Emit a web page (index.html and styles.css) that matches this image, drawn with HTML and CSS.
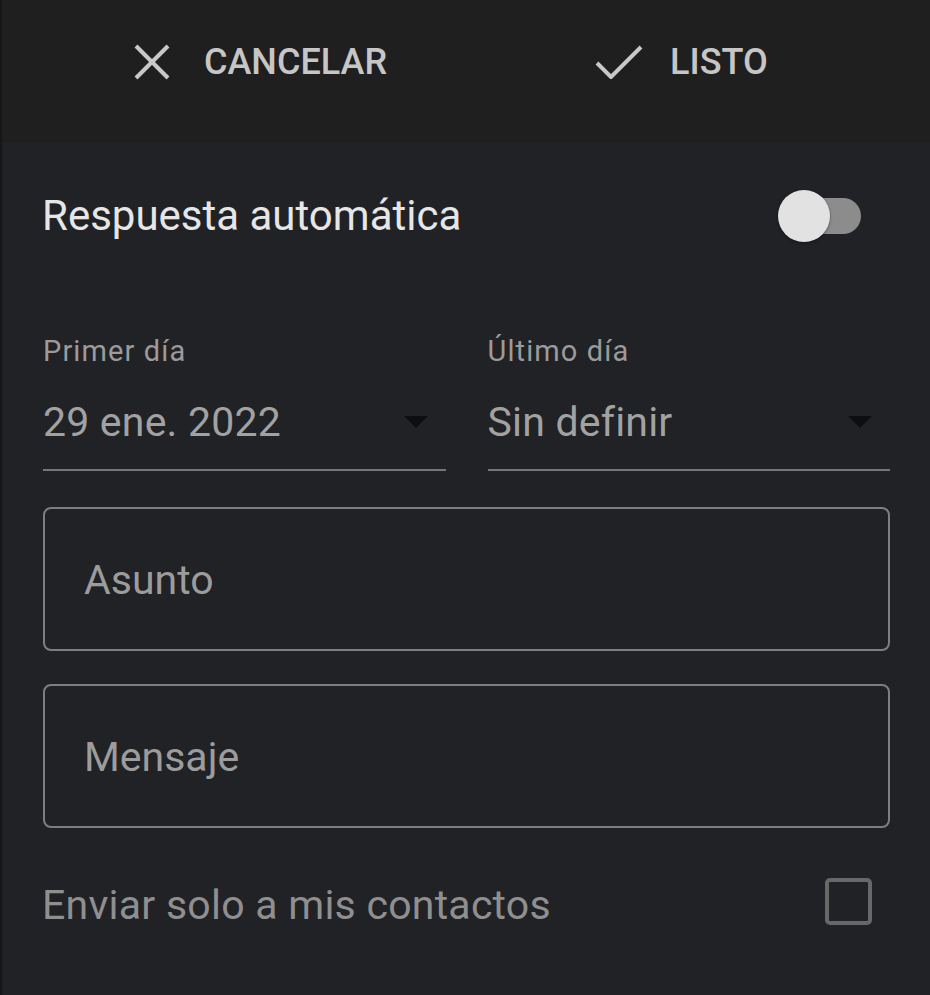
FILE: index.html
```html
<!DOCTYPE html>
<html lang="es">

<head>
  <meta charset="UTF-8">
  <meta name="viewport" content="width=device-width, initial-scale=1.0">
  <link rel="stylesheet" href="styles.css">
  <title>Respuesta automática</title>
</head>

<body>
  <!-- Top bar -->
  <header class="top-bar">
    <div class="actions">
      <button class="action" type="button">
        <svg class="icon-close" width="38" height="36" viewBox="0 0 38 36">
          <line x1="3" y1="2" x2="35" y2="34" />
          <line x1="35" y1="2" x2="3" y2="34" />
        </svg>
        <span>Cancelar</span>
      </button>
      <button class="action action-done" type="button">
        <svg class="icon-check" width="48" height="34" viewBox="0 0 48 34">
          <polyline points="2,18 16,32 46,2" />
        </svg>
        <span>Listo</span>
      </button>
    </div>
  </header>

  <main class="settings">
    <div class="toggle-row">
      <span class="toggle-label">Respuesta automática</span>
      <div class="switch">
        <div class="switch-track"></div>
        <div class="switch-knob"></div>
      </div>
    </div>

    <div class="dates">
      <div class="date-field">
        <span class="field-label">Primer día</span>
        <div class="select">
          <span class="select-value">29 ene. 2022</span>
          <span class="caret"></span>
        </div>
      </div>
      <div class="date-field">
        <span class="field-label">Último día</span>
        <div class="select">
          <span class="select-value">Sin definir</span>
          <span class="caret"></span>
        </div>
      </div>
    </div>

    <div class="text-box subject">Asunto</div>
    <div class="text-box message">Mensaje</div>

    <div class="check-row">
      <span class="check-label">Enviar solo a mis contactos</span>
      <span class="checkbox"></span>
    </div>
  </main>
</body>

</html>
```

FILE: styles.css
```css
body {
  margin: 0;
  background-color: #212226;
  font-family: Roboto, "Noto Sans", sans-serif;
  box-shadow: inset 2px 0 #17171a;
  min-height: 995px;
}

/* top bar */
.top-bar {
  height: 143px;
  background-color: #1f1f1f;
  box-shadow: inset 2px 0 #161616;
}

.actions {
  height: 124px;
  padding-left: 133px;
  display: grid;
  grid-template-columns: 462px auto;
  align-items: center;
}

.action {
  display: flex;
  align-items: center;
  gap: 33px;
  padding: 0;
  background: none;
  border: none;
  color: #c6c6c6;
  font-family: Roboto, sans-serif;
  font-weight: 500;
  font-size: 36px;
  line-height: 36px;
  text-transform: uppercase;
}

.action-done {
  gap: 27px;
}

.action svg {
  stroke: #c8c8c8;
  stroke-width: 4;
  fill: none;
}

/* settings */
.settings {
  padding: 0 40px 40px 43px;
}

.toggle-row {
  height: 146px;
  display: flex;
  align-items: center;
  justify-content: space-between;
}

.toggle-label {
  margin-left: -1px;
  color: #e6e6e6;
  font-size: 42px;
  line-height: 50px;
}

.switch {
  position: relative;
  width: 83px;
  height: 52px;
  margin-right: 29px;
}

.switch-track {
  margin: 8px 0 0 21px;
  width: 62px;
  height: 36px;
  border-radius: 18px;
  background-color: #8c8c8c;
}

.switch-knob {
  position: absolute;
  left: 0;
  top: 0;
  width: 52px;
  height: 52px;
  border-radius: 50%;
  background-color: #e2e2e2;
  box-shadow: 0 1px 3px rgba(0, 0, 0, 0.4);
}

.dates {
  display: grid;
  grid-template-columns: 1fr 1fr;
  gap: 42px;
  padding-top: 45px;
}

.date-field {
  display: flex;
  flex-direction: column;
}

.field-label {
  color: #9b9b9b;
  font-size: 29px;
  line-height: 34px;
  letter-spacing: 1.1px;
}

.select {
  margin-top: 30px;
  padding-bottom: 23px;
  border-bottom: 2px solid #767676;
  display: flex;
  align-items: center;
  justify-content: space-between;
}

.select-value {
  color: #a2a2a2;
  font-size: 41px;
  line-height: 48px;
  letter-spacing: 0.2px;
}

.caret {
  margin: 0 18px 0 0;
  width: 0;
  height: 0;
  border-left: 12px solid transparent;
  border-right: 12px solid transparent;
  border-top: 12px solid #0e0e10;
}

.text-box {
  height: 144px;
  box-sizing: border-box;
  margin-top: 36px;
  padding: 47px 0 0 39px;
  border: 2px solid #7e7e80;
  border-radius: 8px;
  color: #9c9c9c;
  font-size: 41px;
  line-height: 48px;
}

.message {
  margin-top: 33px;
}

.check-row {
  margin-top: 53px;
  display: flex;
  justify-content: space-between;
  align-items: center;
}

.check-label {
  margin-left: -1px;
  color: #8f8f8f;
  font-size: 41px;
  line-height: 48px;
  letter-spacing: 0.25px;
}

.checkbox {
  align-self: flex-start;
  margin: -3px 18px 0 0;
  width: 47px;
  height: 47px;
  box-sizing: border-box;
  border: 4px solid #686868;
  border-radius: 5px;
}
```
